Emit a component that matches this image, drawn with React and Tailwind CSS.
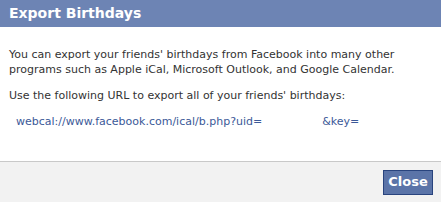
export default function App() {
  return (
    <div className="w-[441px] h-[202px] flex flex-col bg-white overflow-hidden" style={{ fontFamily: '"DejaVu Sans", "Lucida Grande", sans-serif' }}>
      <div className="h-[27px] bg-[#6d84b4] flex items-center px-[9px]">
        <span className="text-white font-bold text-[14px]">Export Birthdays</span>
      </div>
      <div className="flex-1 px-[9px] pt-[20px] text-[11px] leading-[15px] text-[#333]">
        <p>You can export your friends' birthdays from Facebook into many other programs such as Apple iCal, Microsoft Outlook, and Google Calendar.</p>
        <p className="mt-[11px]">Use the following URL to export all of your friends' birthdays:</p>
        <p className="mt-[11px] pl-[7px] text-[#3b5998]">
          webcal://www.facebook.com/ical/b.php?uid=<span className="inline-block w-[60px]" />&amp;key=
        </p>
      </div>
      <div className="h-[41px] border-t border-[#c9c9c9] bg-[#f2f2f2] flex items-center justify-end pr-[8px]">
        <button className="h-[25px] w-[50px] bg-[#5b74a8] border border-[#29447e] text-white font-bold text-[13px] flex items-center justify-center">
          Close
        </button>
      </div>
    </div>
  )
}
